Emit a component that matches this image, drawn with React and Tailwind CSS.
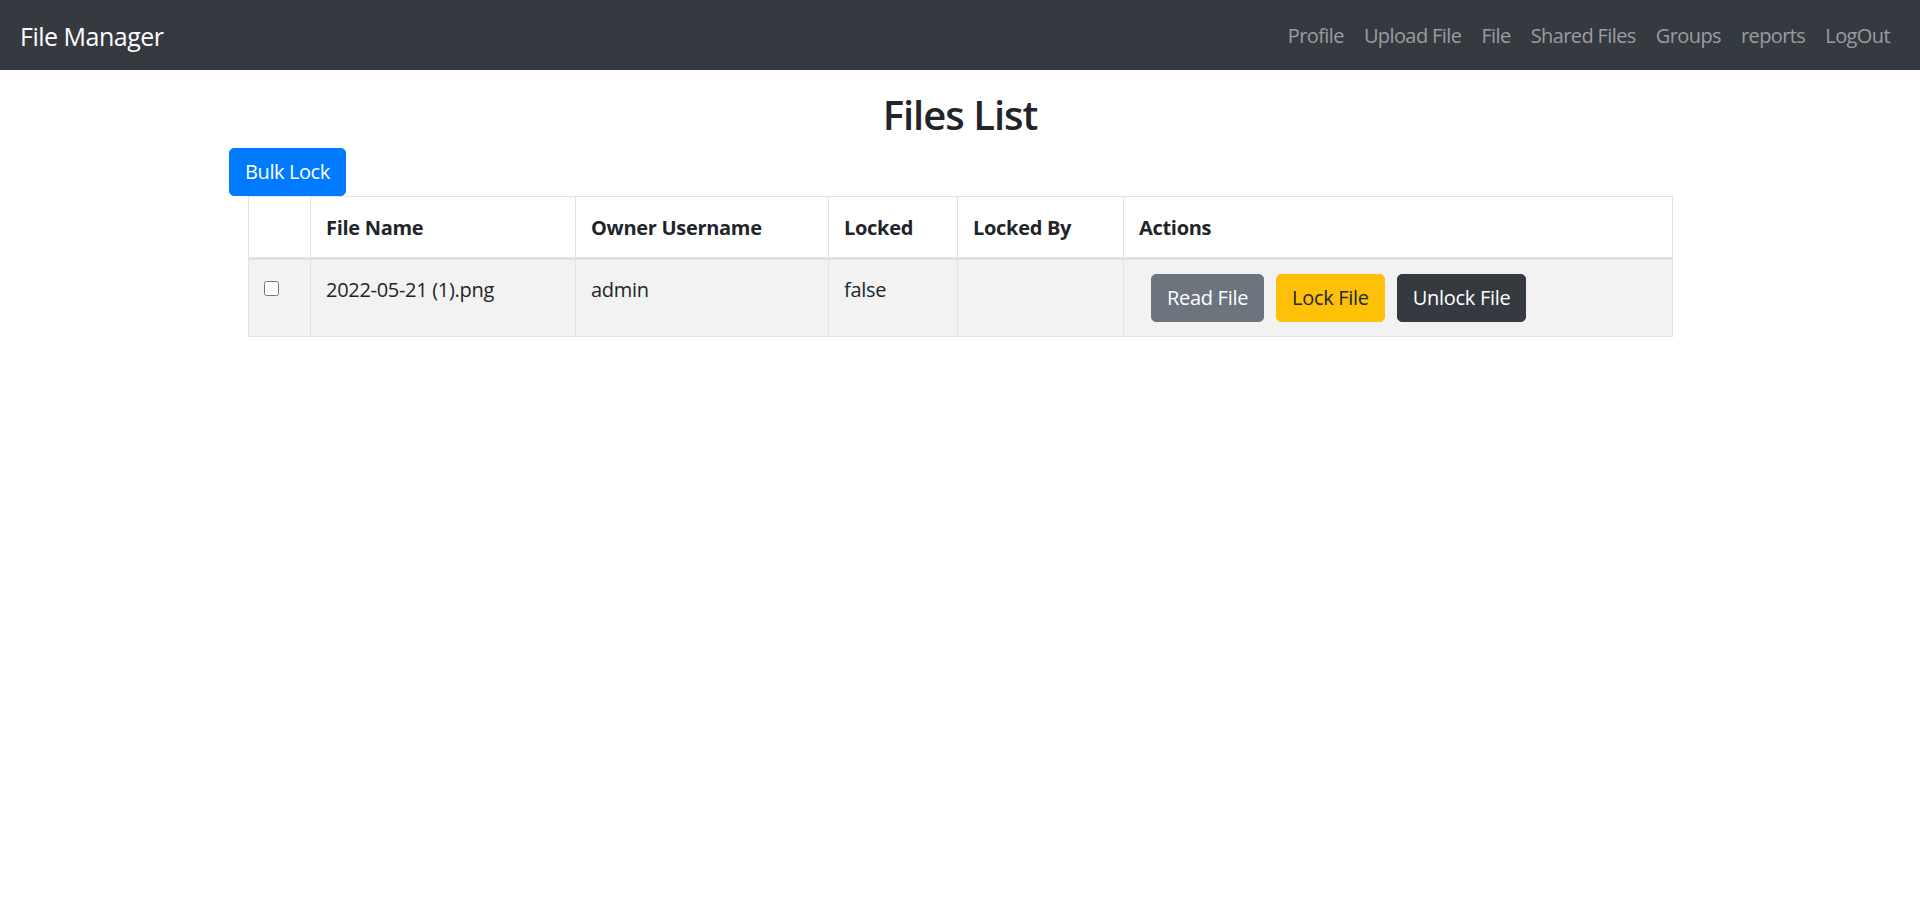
import React from "react";

const navLinks = ["Profile", "Upload File", "File", "Shared Files", "Groups", "reports", "LogOut"];

const files = [{ name: "2022-05-21 (1).png", owner: "admin", locked: "false", lockedBy: "" }];

const Navbar = () => (
  <nav className="h-[70px] bg-[#343a40] flex items-center justify-between px-[20px]">
    <a className="text-[25px] leading-[37px] text-white tracking-[-0.5px] mt-[2px]">File Manager</a>
    <ul className="flex items-center mt-[2px]">
      {navLinks.map((l) => (
        <li key={l}>
          <a className="block px-[10px] text-[20px] leading-[30px] text-[#9a9da0] tracking-[-0.6px]">{l}</a>
        </li>
      ))}
    </ul>
  </nav>
);

const App = () => {
  return (
    <div
      className="min-h-screen bg-white text-[#212529]"
      style={{ fontFamily: "'Open Sans', 'Noto Sans', sans-serif" }}
    >
      <Navbar />
      <h2 className="mt-[21px] mb-[9px] text-center text-[40px] leading-[48px] font-semibold tracking-[-1px]">
        Files List
      </h2>

      <div className="ml-[229px]">
        <button className="h-[48px] px-[15px] rounded-[5px] border border-[#007bff] bg-[#007bff] text-white text-[20px] leading-[30px] tracking-[-0.4px]">
          Bulk Lock
        </button>
      </div>

      <table className="ml-[248px] w-[1425px] border-collapse text-[20px] leading-[30px] tracking-[-0.3px]">
        <thead>
          <tr className="text-left">
            <th className="w-[62px] border border-[#dee2e6] border-b-[3px] pt-[16px] pb-[14px] px-[15px] font-bold"></th>
            <th className="w-[265px] border border-[#dee2e6] border-b-[3px] pt-[16px] pb-[14px] px-[15px] font-bold">File Name</th>
            <th className="w-[253px] border border-[#dee2e6] border-b-[3px] pt-[16px] pb-[14px] px-[15px] font-bold">Owner Username</th>
            <th className="w-[129px] border border-[#dee2e6] border-b-[3px] pt-[16px] pb-[14px] px-[15px] font-bold">Locked</th>
            <th className="w-[166px] border border-[#dee2e6] border-b-[3px] pt-[16px] pb-[14px] px-[15px] font-bold">Locked By</th>
            <th className="border border-[#dee2e6] border-b-[3px] pt-[16px] pb-[14px] px-[15px] font-bold">Actions</th>
          </tr>
        </thead>
        <tbody>
          {files.map((f) => (
            <tr key={f.name} className="bg-[#f2f2f2] align-top">
              <td className="border border-[#dee2e6] p-[15px]">
                <input type="checkbox" className="block m-0 mt-[6px] w-[15px] h-[15px]" />
              </td>
              <td className="border border-[#dee2e6] p-[15px]">{f.name}</td>
              <td className="border border-[#dee2e6] p-[15px]">{f.owner}</td>
              <td className="border border-[#dee2e6] p-[15px]">{f.locked}</td>
              <td className="border border-[#dee2e6] p-[15px]">{f.lockedBy}</td>
              <td className="border border-[#dee2e6] py-[14px] px-[15px]">
                <div className="flex gap-[12px] ml-[12px]">
                  <button className="h-[48px] px-[15px] rounded-[5px] border border-[#6c757d] bg-[#6c757d] text-white">
                    Read File
                  </button>
                  <button className="h-[48px] px-[15px] rounded-[5px] border border-[#ffc107] bg-[#ffc107] text-[#212529]">
                    Lock File
                  </button>
                  <button className="h-[48px] px-[15px] rounded-[5px] border border-[#343a40] bg-[#343a40] text-white">
                    Unlock File
                  </button>
                </div>
              </td>
            </tr>
          ))}
        </tbody>
      </table>
    </div>
  );
};

export default App;
